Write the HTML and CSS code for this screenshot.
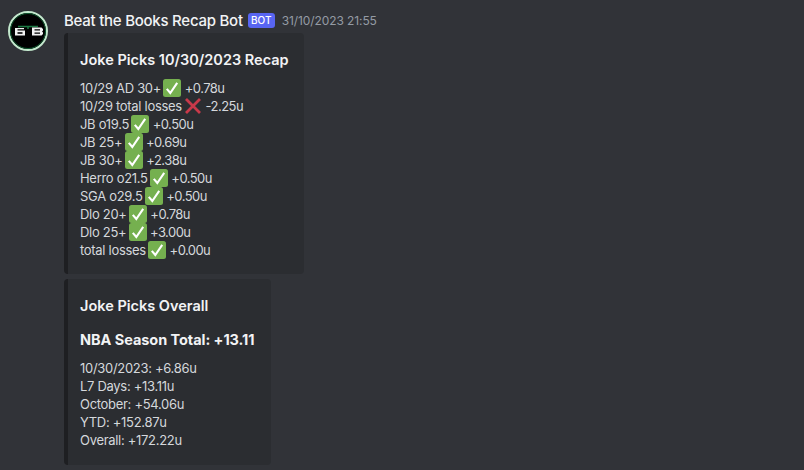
FILE: index.html
```html
<!DOCTYPE html>
<html lang="en">
<head>
    <meta charset="UTF-8">
    <meta name="viewport" content="width=device-width, initial-scale=1.0">
    <title>Beat the Books Recap Bot</title>
    <link rel="stylesheet" href="styles.css">
</head>
<body>

    <svg class="sprites" width="0" height="0">
        <symbol id="check" viewBox="0 0 18 18">
            <rect x="0" y="0" width="18" height="18" rx="2.5" fill="#75b04f"/>
            <path d="M3.800 9.800 L7.300 14 L14.200 3.800" fill="none" stroke="#fff" stroke-width="2.100"/>
        </symbol>
        <symbol id="cross" viewBox="0 0 18 18">
            <path d="M2 2 L16 16 M16 2 L2 16" fill="none" stroke="#c9394a" stroke-width="2.800"/>
        </symbol>
    </svg>

    <div class="message">
        <svg class="avatar" viewBox="0 0 40 40">
            <circle cx="20" cy="20" r="19" fill="#000" stroke="#c3e8cd" stroke-width="2"/>
            <circle cx="20" cy="20" r="17.500" fill="none" stroke="#0f5a30" stroke-width="1"/>
            <path d="M10 15.500 H30 M20 15.500 V18" stroke="#1c7a43" stroke-width="1.500"/>
            <path d="M7 17 H16 V18.200 H9.500 V19.600 H17 V24.500 H7 Z" fill="#f2f2f2"/>
            <path d="M9.500 21.200 H14.500 V22.800 H9.500 Z" fill="#000"/>
            <path d="M24 16.500 H33.500 L35 18 V19.500 L34 20.500 L35 21.500 V23 L33.500 24.500 H24 Z" fill="#f2f2f2"/>
            <path d="M26.500 18.300 H32 V19.600 H26.500 Z M26.500 21.400 H32 V22.700 H26.500 Z" fill="#000"/>
        </svg>
        <div class="content">
            <div class="header">
                <span class="name">Beat the Books Recap Bot</span>
                <span class="badge">BOT</span>
                <span class="time">31/10/2023 21:55</span>
            </div>

            <div class="embed embed-recap">
                <div class="embed-title">Joke Picks 10/30/2023 Recap</div>
                <div class="embed-text">
                    <div>10/29 AD 30+ <svg class="emoji"><use href="#check"/></svg> <span class="units">+0.78u</span></div>
                    <div>10/29 total losses <svg class="emoji"><use href="#cross"/></svg> <span class="units">-2.25u</span></div>
                    <div>JB o19.5 <svg class="emoji"><use href="#check"/></svg> <span class="units">+0.50u</span></div>
                    <div>JB 25+ <svg class="emoji"><use href="#check"/></svg> <span class="units">+0.69u</span></div>
                    <div>JB 30+ <svg class="emoji"><use href="#check"/></svg> <span class="units">+2.38u</span></div>
                    <div>Herro o21.5 <svg class="emoji"><use href="#check"/></svg> <span class="units">+0.50u</span></div>
                    <div>SGA o29.5 <svg class="emoji"><use href="#check"/></svg> <span class="units">+0.50u</span></div>
                    <div>Dlo 20+ <svg class="emoji"><use href="#check"/></svg> <span class="units">+0.78u</span></div>
                    <div>Dlo 25+ <svg class="emoji"><use href="#check"/></svg> <span class="units">+3.00u</span></div>
                    <div>total losses <svg class="emoji"><use href="#check"/></svg> <span class="units">+0.00u</span></div>
                </div>
            </div>

            <div class="embed embed-overall">
                <div class="embed-title">Joke Picks Overall</div>
                <div class="embed-heading">NBA Season Total: +13.11</div>
                <div class="embed-text">
                    <div>10/30/2023: +6.86u</div>
                    <div>L7 Days: +13.11u</div>
                    <div>October: +54.06u</div>
                    <div>YTD: +152.87u</div>
                    <div>Overall: +172.22u</div>
                </div>
            </div>
        </div>
    </div>

</body>
</html>
```

FILE: styles.css
```css
body {
    margin: 0;
    height: 470px;
    overflow: hidden;
    background-color: #313338;
    font-family: Inter, "Noto Sans", sans-serif;
    color: #dbdee1;
}
.sprites {
    display: block;
}
.message {
    display: flex;
    gap: 16px;
    padding: 11px 0 0 8px;
}
.avatar {
    width: 40px;
    height: 40px;
    flex-shrink: 0;
}
.header {
    display: flex;
    align-items: center;
    height: 18px;
    margin-bottom: 4px;
}
.name {
    font-size: 15px;
    font-weight: 500;
    letter-spacing: -0.25px;
    color: #f2f3f5;
}
.badge {
    margin-left: 5px;
    width: 27px;
    height: 15px;
    line-height: 15px;
    text-align: center;
    font-size: 10px;
    font-weight: 500;
    color: white;
    background-color: #5865f2;
    border-radius: 3px;
}
.time {
    margin-left: 7px;
    font-size: 12px;
    letter-spacing: -0.1px;
    color: #949ba4;
}
.embed {
    box-sizing: border-box;
    background-color: #2b2d31;
    border-left: 4px solid #1e1f22;
    border-radius: 4px;
    padding: 16px 16px 16px 12px;
    margin-bottom: 5px;
}
.embed-recap {
    width: 240px;
    height: 241px;
}
.embed-overall {
    width: 207px;
    height: 186px;
}
.embed-title {
    font-size: 14.5px;
    line-height: 22px;
    font-weight: 600;
    color: #f2f3f5;
    margin-bottom: 8px;
    white-space: nowrap;
}
.embed-heading {
    font-size: 14.5px;
    line-height: 22px;
    font-weight: 700;
    letter-spacing: -0.05px;
    color: #f2f3f5;
    margin: 12px 0 8px;
    white-space: nowrap;
}
.embed-text {
    font-size: 13px;
    line-height: 18px;
    letter-spacing: -0.3px;
    color: #d5d8dc;
    white-space: nowrap;
}
.embed-text div {
    height: 18px;
}
.emoji {
    width: 18px;
    height: 18px;
    margin-left: -1px;
    vertical-align: top;
}
.units {
    letter-spacing: -0.55px;
}
```
